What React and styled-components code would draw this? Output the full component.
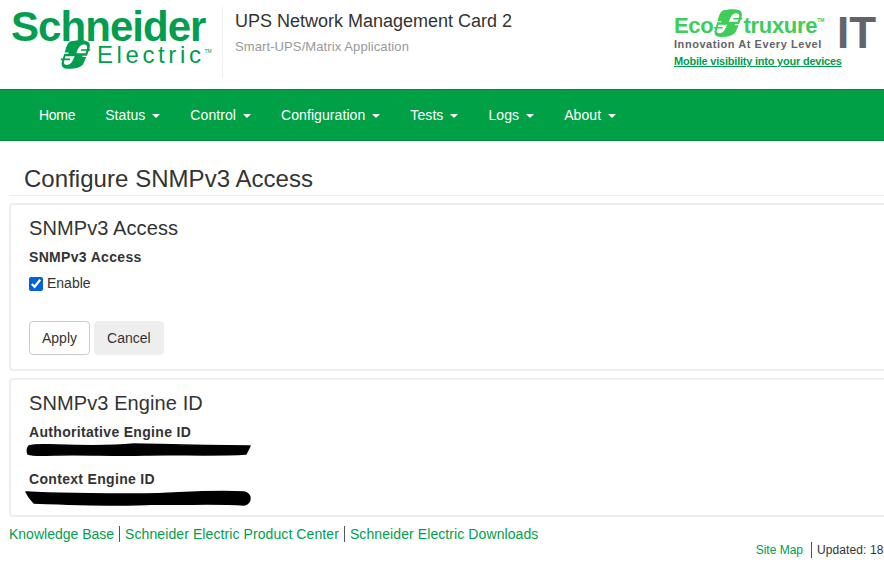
import React from "react";
import styled, { createGlobalStyle } from "styled-components";

const Global = createGlobalStyle`
  html, body {
    margin: 0;
    padding: 0;
    background: #fff;
    overflow: hidden;
    font-family: "Liberation Sans", Arial, sans-serif;
    font-size: 14px;
    color: #333;
  }
`;

const Page = styled.div`
  width: 1000px;
  height: 571px;
  overflow: hidden;
`;

const Header = styled.header`
  height: 89px;
  width: 884px;
  display: flex;
  box-sizing: border-box;
`;

const Brand = styled.div`
  width: 222px;
  height: 68.5px;
  margin-top: 7px;
  padding-top: 2.5px;
  border-right: 1px solid #eee;
  color: #009e4d;
  flex: none;
`;

const BrandTop = styled.div`
  font-size: 42px;
  font-weight: 700;
  letter-spacing: -0.95px;
  line-height: 34px;
  margin-left: 11px;
`;

const BrandBottom = styled.div`
  display: flex;
  align-items: center;
  margin: 1px 0 0 60px;
  font-size: 24px;
  line-height: 20px;
  letter-spacing: 3.6px;
  gap: 6px;
`;

const BrandSwoosh = styled.svg`
  flex: none;
  margin: -6px 0;
`;

const Tm = styled.sup`
  font-size: 5px;
  line-height: 4px;
  letter-spacing: 0;
  vertical-align: ${(p) => p.$raise}px;
`;

const Titles = styled.div`
  flex: 1;
  padding: 10px 0 0 12px;
`;

const Title = styled.div`
  font-size: 18px;
  line-height: 22px;
  color: #333;
`;

const Subtitle = styled.div`
  font-size: 13px;
  letter-spacing: 0.1px;
  line-height: 16px;
  margin-top: 7px;
  color: #999;
`;

const Promo = styled.div`
  width: 210px;
  padding-top: 14px;
  display: flex;
  flex-direction: column;
  flex: none;
`;

const PromoRow = styled.div`
  display: flex;
  gap: 12px;
  align-items: center;
`;

const Eco = styled.div`
  width: 151px;
`;

const EcoLine = styled.div`
  display: flex;
  align-items: center;
  height: 24px;
  color: #3dcd58;
  font-size: 22px;
  font-weight: 700;
  line-height: 24px;
  letter-spacing: -0.3px;
`;

const EcoSwoosh = styled.svg`
  flex: none;
  margin: -10px 0 -4px;
`;

const Tagline = styled.div`
  font-size: 11px;
  font-weight: 700;
  line-height: 13px;
  color: #626469;
  letter-spacing: 0.55px;
  white-space: nowrap;
`;

const ItMark = styled.div`
  font-size: 44px;
  font-weight: 700;
  color: #626469;
  line-height: 36px;
  letter-spacing: 0;
`;

const PromoLink = styled.a`
  font-size: 11px;
  font-weight: 700;
  letter-spacing: -0.22px;
  color: #009e4d;
  text-decoration: underline;
  margin-top: 4px;
  line-height: 13px;
  white-space: nowrap;
`;

const Nav = styled.nav`
  height: 52px;
  width: 884px;
  background: #00a046;
  border-top: 1px solid #008a3c;
  border-bottom: 1px solid #008a3c;
  box-sizing: border-box;
  display: flex;
  padding-left: 24px;
`;

const NavItem = styled.a`
  color: #fff;
  font-size: 14px;
  line-height: 50px;
  padding: 0 15px;
  letter-spacing: ${(p) => (p.$tight ? "-0.3px" : "0.08px")};
  display: flex;
  align-items: center;
  gap: 7px;
`;

const Caret = styled.span`
  width: 0;
  height: 0;
  border-top: 4px solid #fff;
  border-left: 4px solid transparent;
  border-right: 4px solid transparent;
  margin-top: 1px;
`;

const PageTitle = styled.h1`
  margin: 24px 0 0 9px;
  padding: 0 0 2px 15px;
  font-size: 24px;
  font-weight: 400;
  letter-spacing: 0.04px;
  line-height: 28px;
  color: #333;
  border-bottom: 1px solid #eee;
`;

const Panel = styled.section`
  margin: 7px 0 0 9px;
  border: 2px solid #eee;
  border-radius: 4px;
  padding: 11px 0 0 18px;
  height: ${(p) => p.$height}px;
  box-sizing: border-box;
`;

const PanelTitle = styled.h2`
  margin: 0;
  font-size: 20px;
  font-weight: 400;
  letter-spacing: 0.1px;
  line-height: 24px;
  color: #333;
`;

const FieldLabel = styled.div`
  font-weight: 700;
  font-size: 14px;
  line-height: 17px;
  letter-spacing: 0.32px;
  margin-top: ${(p) => p.$top}px;
`;

const CheckRow = styled.label`
  display: flex;
  align-items: center;
  gap: 4px;
  margin-top: 9px;
  line-height: 17px;
`;

const Check = styled.input`
  width: 14px;
  height: 14px;
  margin: 0;
  accent-color: #0062d6;
`;

const Buttons = styled.div`
  display: flex;
  gap: 4px;
  margin-top: 29px;
`;

const Button = styled.button`
  height: 34px;
  padding: 0 12px;
  font: inherit;
  color: #333;
  border-radius: 4px;
  box-sizing: border-box;
  border: 1px solid ${(p) => (p.$muted ? "#eee" : "#ccc")};
  background: ${(p) => (p.$muted ? "#eee" : "#fff")};
`;

const Redaction = styled.svg`
  display: block;
  margin-left: -5px;
`;

const FooterLinks = styled.div`
  display: flex;
  margin: 9px 0 0 9px;
  line-height: 16px;
`;

const FootLink = styled.a`
  color: #009e4d;
  padding: 0 5px;
  letter-spacing: 0.09px;
  border-left: 1px solid #555;
  &:first-child {
    padding-left: 0;
    letter-spacing: 0;
    border-left: 0;
  }
`;

const Updated = styled.div`
  display: flex;
  width: 884px;
  justify-content: flex-end;
  font-size: 12px;
  line-height: 16px;
  white-space: nowrap;
`;

const SiteMap = styled.a`
  color: #009e4d;
  padding-right: 8px;
  border-right: 1px solid #555;
  margin-right: 5px;
`;

const UpdatedText = styled.span`
  width: 67px;
  overflow: hidden;
  letter-spacing: 0.1px;
`;

const swooshHoles =
  "M23 12 C25 7 29 5 33 6 C36 7 35 11 34 14 L33 17 H21 Z M19 21 L16 27 C14 31 10 33 7 32 C4 31 5 28 6 25 L7 21 Z";

function Swoosh({ as: Svg, size, color }) {
  return (
    <Svg width={size} height={size * 0.95} viewBox="0 0 40 38">
      <path
        fill={color}
        d="M13 2 C20 0 33 -1 37 3 C40 6 38 12 36 17 L30 31 C27 36 16 38 8 37 C2 36 1 32 3 26 L7 13 C8 8 10 4 13 2 Z"
      />
      <path fill="#fff" d={swooshHoles} />
      <path fill="none" stroke={color} strokeWidth="2" d="M27 13 H39 M1 25 H13" />
      <path fill="none" stroke="#fff" strokeWidth="1.6" d="M2 17 H11 M29 21 H38" />
    </Svg>
  );
}

const navItems = ["Status", "Control", "Configuration", "Tests", "Logs", "About"];

export default function App() {
  return (
    <Page>
      <Global />
      <Header>
        <Brand>
          <BrandTop>Schneider</BrandTop>
          <BrandBottom>
            <Swoosh as={BrandSwoosh} size={31} color="#009e4d" />
            <span>
              Electric
              <Tm $raise={10}>TM</Tm>
            </span>
          </BrandBottom>
        </Brand>
        <Titles>
          <Title>UPS Network Management Card 2</Title>
          <Subtitle>Smart-UPS/Matrix Application</Subtitle>
        </Titles>
        <Promo>
          <PromoRow>
            <Eco>
              <EcoLine>
                <span>Eco</span>
                <Swoosh as={EcoSwoosh} size={30} color="#3dcd58" />
                <span>
                  truxure
                  <Tm $raise={11}>TM</Tm>
                </span>
              </EcoLine>
              <Tagline>Innovation At Every Level</Tagline>
            </Eco>
            <ItMark>IT</ItMark>
          </PromoRow>
          <PromoLink>Mobile visibility into your devices</PromoLink>
        </Promo>
      </Header>
      <Nav>
        <NavItem $tight>Home</NavItem>
        {navItems.map((item) => (
          <NavItem key={item}>
            {item}
            <Caret />
          </NavItem>
        ))}
      </Nav>
      <PageTitle>Configure SNMPv3 Access</PageTitle>
      <Panel $height={168}>
        <PanelTitle>SNMPv3 Access</PanelTitle>
        <FieldLabel $top={9}>SNMPv3 Access</FieldLabel>
        <CheckRow>
          <Check type="checkbox" defaultChecked />
          Enable
        </CheckRow>
        <Buttons>
          <Button>Apply</Button>
          <Button $muted>Cancel</Button>
        </Buttons>
      </Panel>
      <Panel $height={139}>
        <PanelTitle>SNMPv3 Engine ID</PanelTitle>
        <FieldLabel $top={9}>Authoritative Engine ID</FieldLabel>
        <Redaction width="230" height="16" viewBox="0 0 230 16">
          <path
            d="M5 5 C12 3 22 4 34 4 C60 5 90 5 110 3 C130 3 160 5 226 5 L222 13 C190 15 150 13 120 14 C90 15 60 13 30 14 C20 14 10 15 4 13 C3 10 3 7 5 5 Z"
            fill="#000"
            stroke="#000"
            strokeWidth="1.5"
            strokeLinejoin="round"
          />
        </Redaction>
        <FieldLabel $top={14}>Context Engine ID</FieldLabel>
        <Redaction width="230" height="20" viewBox="0 0 230 20">
          <path
            d="M2 4 C40 6 80 6 120 6 C150 6 180 2 220 4 C228 6 228 15 220 17 C190 15 160 17 130 16 C100 18 60 17 10 15 C6 11 4 8 2 4 Z"
            fill="#000"
            stroke="#000"
            strokeWidth="1.5"
            strokeLinejoin="round"
          />
        </Redaction>
      </Panel>
      <FooterLinks>
        <FootLink>Knowledge Base</FootLink>
        <FootLink>Schneider Electric Product Center</FootLink>
        <FootLink>Schneider Electric Downloads</FootLink>
      </FooterLinks>
      <Updated>
        <SiteMap>Site Map</SiteMap>
        <UpdatedText>Updated: 18</UpdatedText>
      </Updated>
    </Page>
  );
}
